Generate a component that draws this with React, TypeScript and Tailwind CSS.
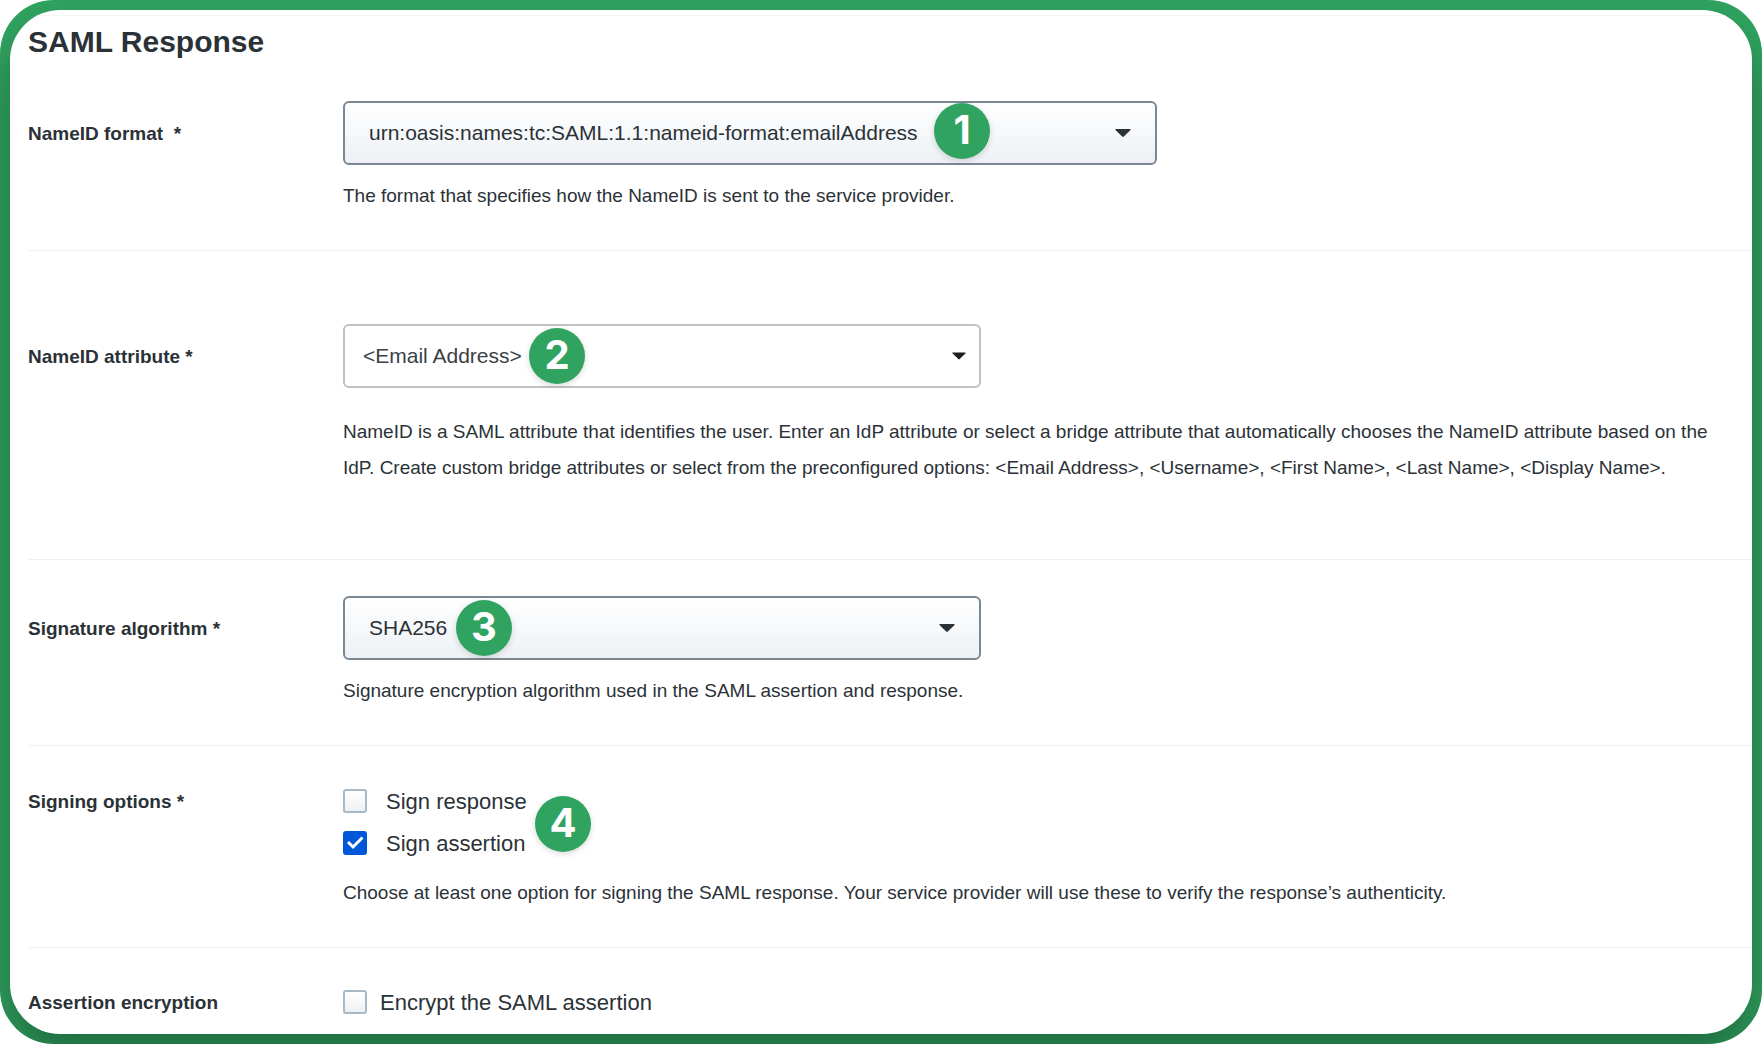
import React, { useState } from 'react';
import { clsx } from 'clsx';

interface FieldRowProps {
  label: React.ReactNode;
  htmlFor?: string;
  className?: string;
  labelClassName?: string;
  children: React.ReactNode;
}

const FieldRow = ({ label, htmlFor, className, labelClassName, children }: FieldRowProps) => {
  const labelStyles = clsx('w-[315px] shrink-0 pt-px text-[19px] font-bold', labelClassName);

  return (
    <div className={clsx('flex border-b border-[#f0f1f2] last:border-b-0', className)}>
      {htmlFor ? (
        <label htmlFor={htmlFor} className={labelStyles}>{label}</label>
      ) : (
        <div className={labelStyles}>{label}</div>
      )}
      <div className="min-w-0 flex-1">{children}</div>
    </div>
  );
};

const Badge = ({ step, className }: { step: number; className?: string }) => (
  <span
    className={clsx(
      'pointer-events-none absolute flex h-14 w-14 items-center justify-center rounded-full bg-[#30a360] pb-0.5 font-[Inter,sans-serif] text-[40px] leading-none font-bold text-white shadow-[0_2px_6px_rgba(0,0,0,0.15)]',
      className
    )}
  >
    {step}
  </span>
);

const Caret = ({ className }: { className?: string }) => (
  <svg
    viewBox="0 0 16 8"
    className={clsx('pointer-events-none absolute top-1/2 h-2 -translate-y-1/2', className)}
    fill="currentColor"
    aria-hidden="true"
  >
    <path d="M1.2 0h13.6c.8 0 1.1.7.5 1.2L8.8 7.5c-.5.5-1.1.5-1.6 0L.7 1.2C.1.7.4 0 1.2 0z" />
  </svg>
);

interface SelectBoxProps {
  id: string;
  options: string[];
  plain?: boolean;
  className?: string;
  children?: React.ReactNode;
}

const SelectBox = ({ id, options, plain, className, children }: SelectBoxProps) => (
  <div className={clsx('relative', className)}>
    <select
      id={id}
      className={clsx(
        'block h-16 w-full appearance-none rounded-md border-2 text-[21px] outline-none',
        plain
          ? 'border-[#c1c1c1] bg-white px-[18px] text-[#3a4045]'
          : 'border-[#7b8893] bg-linear-to-b from-white to-[#edf1f5] px-6'
      )}
    >
      {options.map((option) => (
        <option key={option}>{option}</option>
      ))}
    </select>
    <Caret className={plain ? 'right-[15px] w-[14px] text-[#1b1f22]' : 'right-[26px] w-4'} />
    {children}
  </div>
);

interface CheckboxProps {
  label: string;
  defaultChecked?: boolean;
  className?: string;
}

const Checkbox = ({ label, defaultChecked = false, className }: CheckboxProps) => {
  const [checked, setChecked] = useState(defaultChecked);

  return (
    <label className={clsx('flex h-[42px] w-fit items-center text-[22px]', className)}>
      <span className="relative block h-6 w-6">
        <input
          type="checkbox"
          checked={checked}
          onChange={(e) => setChecked(e.target.checked)}
          className="block h-6 w-6 appearance-none rounded-[3px] border-2 border-[#a9b8c5] bg-linear-to-b from-white to-[#edf1f4] checked:border-[#0057d8] checked:bg-[#0057d8] checked:bg-none"
        />
        {checked && (
          <svg viewBox="0 0 24 24" className="pointer-events-none absolute inset-0 h-6 w-6" fill="none" aria-hidden="true">
            <path d="M5 11l5 5 9.500-9.500" stroke="white" strokeWidth="3" />
          </svg>
        )}
      </span>
      {label}
    </label>
  );
};

const HelpText = ({ className, children }: { className?: string; children: React.ReactNode }) => (
  <p className={clsx('text-[19px] leading-9', className)}>{children}</p>
);

const App = () => {
  return (
    <div className="min-h-screen bg-white font-['Liberation_Sans',Arial,sans-serif] text-[#2b3237]">
      <div className="flex min-h-screen flex-col overflow-hidden rounded-[54px] bg-[#30a360] p-[10px]">
        <main className="flex-1 overflow-hidden rounded-[50px] bg-white pt-[5px] pl-[18px] shadow-[0_30px_50px_rgba(0,0,0,0.34)]">
          <h1 className="border-t border-[#f4f4f4] pt-2 text-[30px] leading-9 font-bold">SAML Response</h1>

          <form>
            <FieldRow
              label={<>NameID format&nbsp; *</>}
              htmlFor="nameid-format"
              className="pt-[41px] pb-9"
              labelClassName="leading-[64px]"
            >
              <SelectBox
                id="nameid-format"
                options={['urn:oasis:names:tc:SAML:1.1:nameid-format:emailAddress']}
                className="max-w-[814px]"
              >
                <Badge step={1} className="top-[2px] left-[591px]" />
              </SelectBox>
              <HelpText className="mt-[13px]">
                The format that specifies how the NameID is sent to the service provider.
              </HelpText>
            </FieldRow>

            <FieldRow
              label="NameID attribute *"
              htmlFor="nameid-attribute"
              className="py-[73px]"
              labelClassName="leading-[64px]"
            >
              <SelectBox
                id="nameid-attribute"
                options={['<Email Address>', '<Username>', '<First Name>', '<Last Name>', '<Display Name>']}
                plain
                className="max-w-[638px]"
              >
                <Badge step={2} className="top-1 left-[186px]" />
              </SelectBox>
              <HelpText className="mt-[26px] pr-2">
                NameID is a SAML attribute that identifies the user. Enter an IdP attribute or select a bridge
                attribute that automatically chooses the NameID attribute based on the IdP. Create custom bridge
                attributes or select from the preconfigured options: &lt;Email Address&gt;, &lt;Username&gt;,
                &lt;First Name&gt;, &lt;Last Name&gt;, &lt;Display Name&gt;.
              </HelpText>
            </FieldRow>

            <FieldRow
              label="Signature algorithm *"
              htmlFor="signature-algorithm"
              className="py-9"
              labelClassName="leading-[64px]"
            >
              <SelectBox id="signature-algorithm" options={['SHA256']} className="max-w-[638px]">
                <Badge step={3} className="top-1 left-[113px]" />
              </SelectBox>
              <HelpText className="mt-[13px]">
                Signature encryption algorithm used in the SAML assertion and response.
              </HelpText>
            </FieldRow>

            <FieldRow label="Signing options *" className="pt-[34px] pb-9" labelClassName="leading-[42px]">
              <div className="relative">
                <Checkbox label="Sign response" className="gap-[19px]" />
                <Checkbox label="Sign assertion" defaultChecked className="gap-[19px]" />
                <Badge step={4} className="top-4 left-48" />
              </div>
              <HelpText className="mt-[11px]">
                Choose at least one option for signing the SAML response. Your service provider will use these to
                verify the response’s authenticity.
              </HelpText>
            </FieldRow>

            <FieldRow label="Assertion encryption" className="pt-[33px]" labelClassName="leading-[42px]">
              <Checkbox label="Encrypt the SAML assertion" className="gap-[13px]" />
            </FieldRow>
          </form>
        </main>
      </div>
    </div>
  );
};

export default App;
